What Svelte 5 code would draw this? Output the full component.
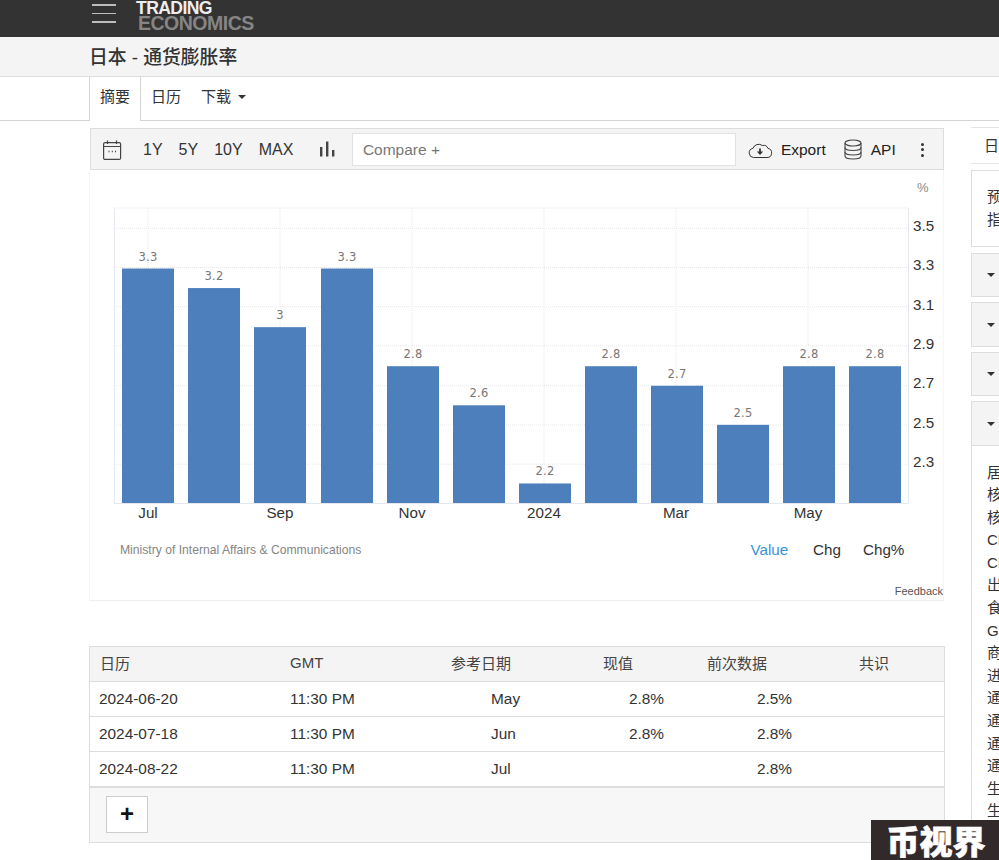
<script>
  const bars = [3.3, 3.2, 3, 3.3, 2.8, 2.6, 2.2, 2.8, 2.7, 2.5, 2.8, 2.8];
  const barX = [122, 188, 254, 321, 387, 453, 519, 585, 651, 717, 783, 849];
  const y = (v) => 503 - (v - 2.1) * 195.4;
  const yTicks = ['3.5', '3.3', '3.1', '2.9', '2.7', '2.5', '2.3'];
  const xTicks = [[148, 'Jul'], [280, 'Sep'], [412, 'Nov'], [544, '2024'], [676, 'Mar'], [808, 'May']];
  const ranges = ['1Y', '5Y', '10Y', 'MAX'];
  const rows = [
    ['2024-06-20', '11:30 PM', 'May', '2.8%', '2.5%'],
    ['2024-07-18', '11:30 PM', 'Jun', '2.8%', '2.8%'],
    ['2024-08-22', '11:30 PM', 'Jul', '', '2.8%']
  ];
  const related = ['居民消费价格指数', '核心消费者物价指数', '核心通胀率', 'CPI住房通胀', 'CPI运输', '出口价格', '食品通胀', 'GDP平减指数', '商品通胀', '进口价格', '通胀率', '通胀率月率', '通胀预期', '通胀服务', '生产者价格', '生产者价格变化'];
</script>

<div class="page">
  <header class="top">
    <div class="burger"><span></span><span></span><span></span></div>
    <div class="logo"><span class="l1">TRADING</span><span class="l2">ECONOMICS</span></div>
  </header>
  <div class="titlebar"><h1>日本 - 通货膨胀率</h1></div>
  <nav class="tabs">
    <span class="tab active">摘要</span>
    <span class="tab">日历</span>
    <span class="tab dl">下载<i class="caret"></i></span>
  </nav>

  <div class="content">
    <main class="main">
      <div class="toolbar">
        <svg class="cal" width="20" height="22" viewBox="0 0 20 22" fill="none" stroke="#444" stroke-width="1.2">
          <rect x="1.6" y="3.6" width="17" height="16.8" rx="1.5" />
          <path d="M1.6 7.5h17M5.5 1.5v3.5M14.5 1.5v3.5" />
          <path d="M6.5 12.5h1M9.8 12.5h1M13 12.5h1" stroke-width="1.5" />
        </svg>
        <div class="ranges">
          {#each ranges as r}<span>{r}</span>{/each}
        </div>
        <svg class="barsicon" width="16" height="16" viewBox="0 0 16 16" fill="#444">
          <rect x="1" y="6" width="2.4" height="9.5" />
          <rect x="7" y="0.5" width="2.4" height="15" />
          <rect x="13" y="9" width="2.4" height="6.5" />
        </svg>
        <div class="compare">Compare +</div>
        <svg class="cloud" width="26" height="18" viewBox="0 0 26 18" fill="none" stroke="#333" stroke-width="1">
          <path d="M6.5 16.5h13.5a4.6 4.6 0 0 0 1-9.1 4.8 4.8 0 0 0-5.6-2.9A6.2 6.2 0 0 0 5.9 7.4 4.6 4.6 0 0 0 6.5 16.5z" />
          <path d="M13 7.5v4.5" stroke-width="1.8" />
          <path d="M9.8 10.6h6.4L13 14z" fill="#333" stroke="none" />
        </svg>
        <span class="tool">Export</span>
        <svg class="db" width="18" height="21" viewBox="0 0 18 21" fill="none" stroke="#444" stroke-width="1.1">
          <ellipse cx="9" cy="4" rx="8" ry="3" />
          <path d="M1 4v13c0 1.7 3.6 3 8 3s8-1.300 8-3V4" />
          <path d="M1 8.500c0 1.700 3.600 3 8 3s8-1.300 8-3M1 13c0 1.700 3.600 3 8 3s8-1.300 8-3" />
        </svg>
        <span class="tool api">API</span>
        <div class="dots"><span></span><span></span><span></span></div>
      </div>

      <div class="chart">
        <svg width="854" height="430" viewBox="90 170 854 430">
          <text x="917" y="192" class="pct">%</text>
          <g class="grid">
            <path d="M114 208H908" />
            {#each [228.300, 267.500, 306.700, 345.800, 385.700, 425, 464.200] as g}
              <path d={`M114 ${g}H908`} />
            {/each}
            {#each xTicks as t}
              <path d={`M${t[0]} 208V503`} />
            {/each}
          </g>
          <path d="M114.500 208V503M908.500 208V503M114 503.500H908" class="frame" />
          {#each bars as b, i}
            <rect x={barX[i]} y={y(b)} width="52" height={503 - y(b)} fill="#4e7fbd" />
            <text x={barX[i] + 26} y={y(b) - 8} class="val">{b}</text>
          {/each}
          {#each yTicks as t, i}
            <text x="913" y={231 + i * 39.300} class="axis">{t}</text>
          {/each}
          {#each xTicks as t}
            <text x={t[0]} y="518" class="axis mid">{t[1]}</text>
          {/each}
          <text x="120" y="554" class="src">Ministry of Internal Affairs &amp; Communications</text>
          <text x="750.500" y="555" class="axis blue">Value</text>
          <text x="813" y="555" class="axis">Chg</text>
          <text x="863" y="555" class="axis">Chg%</text>
          <text x="943" y="595" class="feedback">Feedback</text>
        </svg>
      </div>

      <div class="cal-table">
        <table>
          <colgroup>
            <col style="width:190px" /><col style="width:161px" /><col style="width:152px" />
            <col style="width:104px" /><col style="width:152px" /><col style="width:95px" />
          </colgroup>
          <thead>
            <tr><th>日历</th><th>GMT</th><th>参考日期</th><th>现值</th><th>前次数据</th><th>共识</th></tr>
          </thead>
          <tbody>
            {#each rows as r}
              <tr>
                <td class="d1">{r[0]}</td>
                <td>{r[1]}</td>
                <td class="ref">{r[2]}</td>
                <td class="cur">{r[3]}</td>
                <td class="prev">{r[4]}</td>
                <td></td>
              </tr>
            {/each}
          </tbody>
        </table>
        <div class="tfoot"><button>+</button></div>
      </div>
    </main>

    <aside class="side">
      <div class="s-tab">日本</div>
      <div class="s-card">预测<br />指标</div>
      <div class="acc a1"><i class="caret"></i></div>
      <div class="acc a2"><i class="caret"></i></div>
      <div class="acc a3"><i class="caret"></i></div>
      <div class="acc a4"><i class="caret"></i></div>
      <ul class="s-list">
        {#each related as item}<li>{item}</li>{/each}
      </ul>
    </aside>
  </div>

  <div class="stamp">币视界</div>
</div>

<style>
  :global(body) {
    margin: 0;
    background: #fff;
  }
  .page {
    position: relative;
    width: 999px;
    height: 860px;
    overflow: hidden;
    font-family: "Liberation Sans", "Noto Sans CJK SC", sans-serif;
    color: #333;
  }
  .top {
    height: 37px;
    background: #333;
    display: flex;
    align-items: flex-start;
    padding-left: 92px;
    box-sizing: border-box;
  }
  .burger {
    width: 24px;
    padding-top: 4px;
    display: flex;
    flex-direction: column;
    gap: 7px;
  }
  .burger span {
    height: 1.5px;
    background: #bdbdbd;
  }
  .logo {
    margin-left: 20px;
    display: flex;
    flex-direction: column;
    font-weight: 700;
    line-height: 15px;
  }
  .l1 {
    color: #eee;
    font-size: 17.600px;
    letter-spacing: -0.600px;
    margin-top: 1px;
  }
  .l2 {
    color: #858585;
    font-size: 19.500px;
    letter-spacing: -0.500px;
    margin-left: 2px;
  }
  .titlebar {
    background: #f4f4f4;
    border-bottom: 1px solid #ddd;
    padding: 0 0 3px 89px;
    box-sizing: content-box;
    display: flex;
    align-items: center;
    height: 36px;
  }
  h1 {
    margin: 0;
    font-size: 18.800px;
    font-weight: 500;
    color: #333;
  }
  .tabs {
    height: 43px;
    border-bottom: 1px solid #d5d5d5;
    padding-left: 89px;
    display: flex;
    box-sizing: content-box;
  }
  .tab {
    font-size: 15px;
    line-height: 40px;
    padding: 0 10px;
    color: #333;
  }
  .tab + .tab {
    padding: 0 0 0 10px;
    margin-right: 10px;
  }
  .active {
    height: 44px;
    background: #fff;
    border-left: 1px solid #d5d5d5;
    border-right: 1px solid #d5d5d5;
    box-sizing: border-box;
    width: 52px;
  }
  .tab.dl {
    display: flex;
    align-items: center;
    gap: 7px;
    height: 40px;
  }
  .caret {
    display: inline-block;
    width: 0;
    height: 0;
    border-left: 4px solid transparent;
    border-right: 4px solid transparent;
    border-top: 4px solid #333;
  }
  .content {
    display: flex;
    gap: 27px;
    padding: 7px 0 0 90px;
  }
  .main {
    flex: none;
    width: 854px;
  }
  .toolbar {
    height: 42px;
    box-sizing: border-box;
    background: #f4f4f4;
    border: 1px solid #ddd;
    display: flex;
    align-items: center;
    padding: 1px 0 0 11px;
    font-size: 16px;
  }
  .cal {
    flex: none;
  }
  .ranges {
    display: flex;
    gap: 16px;
    margin-left: 21px;
    color: #333;
  }
  .barsicon {
    margin-left: 25.600px;
    flex: none;
    margin-top: -2px;
  }
  .compare {
    margin-left: 17px;
    width: 384px;
    height: 33px;
    box-sizing: border-box;
    background: #fff;
    border: 1px solid #e2e2e2;
    color: #777;
    font-size: 15.500px;
    line-height: 31px;
    padding-left: 10px;
    flex: none;
    margin-top: -1px;
  }
  .cloud {
    margin-left: 11px;
    flex: none;
  }
  .tool {
    margin-left: 8px;
    font-size: 15.500px;
    color: #222;
  }
  .db {
    margin-left: 18px;
    flex: none;
  }
  .api {
    margin-left: 9px;
  }
  .dots {
    margin-left: 25px;
    display: flex;
    flex-direction: column;
    gap: 2.500px;
  }
  .dots span {
    width: 3px;
    height: 3px;
    border-radius: 50%;
    background: #333;
  }
  .chart {
    height: 431px;
    box-sizing: border-box;
    border-bottom: 1px solid #eee;
    border-left: 1px solid #f5f5f5;
    border-right: 1px solid #f5f5f5;
    margin-left: -1px;
  }
  .chart svg {
    display: block;
  }
  .grid path {
    stroke: #e8e8e8;
    stroke-width: 1;
    stroke-dasharray: 1 1;
    fill: none;
  }
  .frame {
    stroke: #e4e8ee;
    stroke-width: 1;
    fill: none;
  }
  .pct {
    font-size: 13px;
    fill: #888;
  }
  .val {
    font-family: "DejaVu Sans", sans-serif;
    font-size: 11.500px;
    fill: #777;
    text-anchor: middle;
    letter-spacing: 0.200px;
  }
  .axis {
    font-size: 15.200px;
    fill: #333;
  }
  .mid {
    text-anchor: middle;
  }
  .blue {
    fill: #3a93d4;
  }
  .src {
    font-size: 12.150px;
    fill: #858585;
  }
  .feedback {
    font-size: 11px;
    fill: #555;
    text-anchor: end;
  }
  .cal-table {
    margin: 45px 0 0 -1px;
    width: 856px;
    border: 1px solid #ddd;
    box-sizing: border-box;
  }
  table {
    width: 854px;
    table-layout: fixed;
    border-collapse: collapse;
    font-size: 15.400px;
  }
  th {
    height: 34px;
    padding: 0 0 2px 10px;
    background: #f4f4f4;
    font-weight: 400;
    text-align: left;
    color: #444;
    font-size: 15px;
    box-sizing: border-box;
    border-bottom: 1px solid #ddd;
  }
  td {
    height: 35px;
    padding: 0 0 0 10px;
    box-sizing: border-box;
    border-bottom: 1px solid #ddd;
    color: #333;
  }
  td.d1 {
    padding-left: 9px;
  }
  td.ref {
    padding-left: 50px;
  }
  td.cur {
    text-align: right;
    padding-right: 33px;
  }
  td.prev {
    text-align: right;
    padding-right: 57px;
  }
  .tfoot {
    height: 55px;
    box-sizing: border-box;
    background: #f7f7f7;
    border-top: 1px solid #ddd;
    padding: 8px 0 0 16px;
  }
  button {
    display: block;
    width: 42px;
    height: 37px;
    padding: 0;
    background: #fff;
    border: 1px solid #ccc;
    font-family: "Liberation Sans", sans-serif;
    font-size: 24px;
    font-weight: 700;
    line-height: 34px;
    color: #111;
  }
  .side {
    flex: none;
    width: 200px;
    margin-top: -1px;
    font-size: 15px;
    color: #333;
  }
  .s-tab {
    height: 37px;
    box-sizing: border-box;
    border-top: 1px solid #e5e5e5;
    border-bottom: 1px solid #e5e5e5;
    padding-left: 13px;
    line-height: 36px;
  }
  .s-card {
    margin-top: 6px;
    height: 77px;
    box-sizing: border-box;
    border: 1px solid #ddd;
    padding: 14px 0 0 15px;
    line-height: 23px;
  }
  .acc {
    box-sizing: border-box;
    background: #f4f4f4;
    border: 1px solid #ddd;
    padding-left: 15px;
    display: flex;
    align-items: center;
  }
  .a1 { margin-top: 6px; height: 44px; }
  .a2 { margin-top: 5px; height: 45px; }
  .a3 { margin-top: 5px; height: 44px; }
  .a4 { margin-top: 5px; height: 45px; }
  .s-list {
    list-style: none;
    margin: 0;
    padding: 15.500px 0 0 15px;
    border-left: 1px solid #ddd;
    line-height: 22.600px;
    white-space: nowrap;
  }
  .stamp {
    position: absolute;
    left: 871px;
    top: 820px;
    width: 128px;
    height: 40px;
    background: #32292b;
    color: #fff;
    font-family: "Noto Sans CJK SC", sans-serif;
    font-weight: 900;
    font-size: 33px;
    line-height: 41px;
    padding-left: 15.500px;
    box-sizing: border-box;
    white-space: nowrap;
    -webkit-text-stroke: 0.600px #fff;
  }
</style>
